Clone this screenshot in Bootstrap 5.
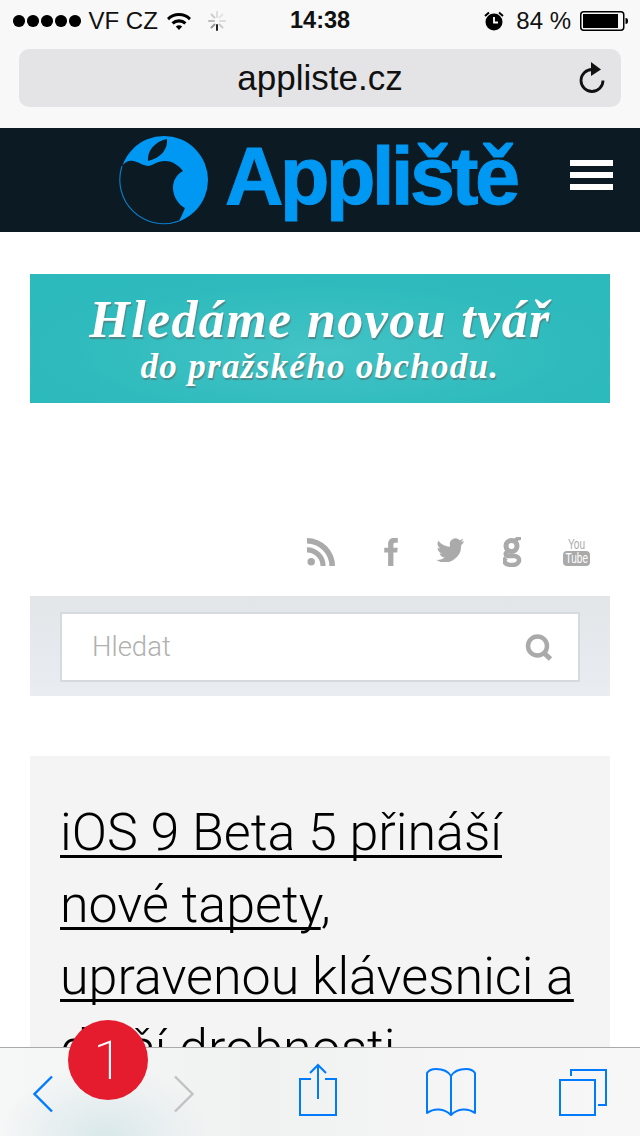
<!DOCTYPE html>
<html lang="cs">
<head>
<meta charset="UTF-8">
<meta name="viewport" content="width=device-width, initial-scale=1.0">
<title>Appliště</title>
<link href="https://cdn.jsdelivr.net/npm/bootstrap@5.3.3/dist/css/bootstrap.min.css" rel="stylesheet">
<script src="https://cdn.jsdelivr.net/npm/bootstrap@5.3.3/dist/js/bootstrap.bundle.min.js"></script>
<style>
html, body { margin: 0; height: 1136px; overflow: hidden; background: #fff; }
body { font-family: "Liberation Sans", Arial, sans-serif; position: relative; width: 640px; }
.browser-top { height: 128px; background: #f8f8f8; }
.status-row { height: 42px; padding: 0 12px 0 13px; font-size: 24px; color: #111; }
.dots { display: flex; gap: 2.500px; margin-right: 8px; }
.dots i { width: 11.500px; height: 11.500px; border-radius: 50%; background: #000; display: block; }
.st-left { width: 277px; }
.st-time { font-size: 23.500px; font-weight: 700; width: 120px; }
.st-right { flex: 1; justify-content: flex-end; }
.gap-alarm { margin-left: 12px; }
.gap-batt { margin-left: 9px; }
.url-wrap { height: 58px; margin: 7px 19px 0; background: #e4e4e6; border-radius: 10px; position: relative; font-size: 35px; color: #111; }
.url-reload { position: absolute; right: 15px; top: 12px; }
.site-head { height: 104px; background: #0c1a24; }
.logo-wrap { margin-left: 119px; width: 400px; }
.logo-word { font-size: 81px; font-weight: 700; color: #0098f2; letter-spacing: -3.500px; line-height: 104px; margin: -8px 0 0 16px; white-space: nowrap; -webkit-text-stroke: 1px #0098f2; }
.burger { margin-left: 51px; margin-bottom: 10px; width: 43px; display: flex; flex-direction: column; gap: 6px; }
.burger i { display: block; height: 6px; background: #fff; }
.promo { height: 129px; margin: 42px 30px 0; background: radial-gradient(ellipse at 50% 60%, #43c3c6 0%, #2fbbbd 60%, #2bb9bb 100%); color: #fff; text-align: center; font-family: "Liberation Serif", serif; font-style: italic; font-weight: 700; text-shadow: 1px 2px 1px #4b8b8c; }
.promo-a { font-size: 52px; line-height: 58px; letter-spacing: 1.400px; padding-top: 17px; white-space: nowrap; }
.promo-b { font-size: 35px; line-height: 36px; letter-spacing: 1.300px; white-space: nowrap; }
.social { height: 30px; margin: 134px 50px 0 0; justify-content: flex-end; }
.social-item { display: block; flex-shrink: 0; }
.gap-rss { margin-right: 49px; }
.gap-fb { margin-right: 38px; }
.gap-tw { margin-right: 39px; margin-top: -4px; }
.gap-g { margin-right: 41px; }
.yt-wrap { width: 27px; text-align: center; color: #aaa; line-height: 1; margin-top: -1px; }
.yt-you { font-size: 14px; display: block; height: 14px; line-height: 14px; transform: scaleX(.72); }
.yt-tube { display: flex; justify-content: center; background: #aaa; color: #fff; border-radius: 4px; font-size: 14px; height: 15px; line-height: 15px; width: 27px; }
.yt-tube span { display: block; flex-shrink: 0; transform: scaleX(.72); }
.search-panel { height: 100px; margin: 29px 30px 0; padding: 16px 30px; background: linear-gradient(#e2e6e9, #e9ecf1); }
.search-box { height: 70px; background: #fff; border: 2px solid #d5dae0; padding: 0 25px 0 30px; font-family: Roboto, sans-serif; font-weight: 300; font-size: 27.500px; color: #b0b0b0; }
.article-box { margin: 60px 30px 0; padding: 41px 30px 0; background: #f4f4f4; height: 340px; font-family: Roboto, sans-serif; font-weight: 300; font-size: 52px; line-height: 72px; color: #000; }
.article-box a { color: #000; text-decoration: underline; text-decoration-thickness: 3px; text-underline-offset: 5px; text-decoration-skip-ink: none; }
.toolbar { position: absolute; left: 0; right: 0; top: 1047px; height: 89px; border-top: 1px solid #aaa; background: radial-gradient(ellipse 105px 70px at 105px 89px, #d9e8ea 0%, rgba(230,238,240,.7) 60%, rgba(243,243,243,0) 100%), linear-gradient(90deg, #f6f7f7 0%, #f0f1f1 40%, #f5f5f5 70%, #f7f7f7 100%); }
.tb-icon { position: absolute; display: block; }
.notif { position: absolute; left: 68px; top: 1020px; width: 80px; height: 80px; border-radius: 50%; background: #e41c2e; color: #fff; font-size: 54px; font-family: Roboto, sans-serif; font-weight: 200; }
</style>
</head>
<body>
<div class="browser-top">
    <div class="status-row d-flex align-items-center">
        <div class="st-left d-flex align-items-center">
            <div class="dots"><i></i><i></i><i></i><i></i><i></i></div>
            <span>VF CZ</span>
            <svg class="ms-2" width="26" height="20" viewBox="0 0 26 20"><path d="M1 7a17 17 0 0 1 24 0l-2 2.200a14 14 0 0 0-20 0z" fill="#000"/><path d="M5.500 11.300a11 11 0 0 1 15 0l-2.100 2.200a8 8 0 0 0-10.800 0z" fill="#000"/><path d="M9.800 15.500a5 5 0 0 1 6.400 0L13 19z" fill="#000"/></svg>
            <svg class="ms-3" width="18" height="20" viewBox="0 0 18 20" stroke-width="2" stroke-linecap="round"><path d="M9 1v5" stroke="#ddd"/><path d="M14.500 3.500l-3 3" stroke="#e4e4e4"/><path d="M17 10h-5" stroke="#ddd"/><path d="M14.500 16.500l-3-3" stroke="#ccc"/><path d="M9 19v-5" stroke="#222"/><path d="M3.500 16.500l3-3" stroke="#999"/><path d="M1 10h5" stroke="#bbb"/><path d="M3.500 3.500l3 3" stroke="#ccc"/></svg>
        </div>
        <div class="st-time">14:38</div>
        <div class="st-right d-flex align-items-center">
            <svg width="20" height="20" viewBox="0 0 20 20"><circle cx="10" cy="11" r="8.500" fill="#000"/><path d="M10 6v5.500H14" fill="none" stroke="#fff" stroke-width="1.800"/><path d="M1 5l4-3.500M19 5l-4-3.500" stroke="#000" stroke-width="2"/></svg>
            <span class="gap-alarm">84 %</span>
            <svg class="gap-batt" width="48" height="20" viewBox="0 0 48 20"><rect x=".75" y=".75" width="43" height="18.500" rx="3" fill="none" stroke="#000" stroke-width="1.500"/><rect x="3" y="3" width="35" height="14" fill="#000"/><path d="M45.500 7c2 0 2.500 1 2.500 3s-.5 3-2.500 3z" fill="#000"/></svg>
        </div>
    </div>
    <div class="url-wrap d-flex align-items-center justify-content-center">
        <span>appliste.cz</span>
        <svg class="url-reload" width="28" height="34" viewBox="0 0 28 34"><path d="M14 8.500a11 11 0 1 0 11 11" fill="none" stroke="#111" stroke-width="2.800"/><path d="M13 1l10 7.500L13 15z" fill="#111"/></svg>
    </div>
</div>

<header class="site-head d-flex align-items-center">
    <div class="logo-wrap d-flex align-items-center">
        <svg width="90" height="90" viewBox="0 0 90 90" class="flex-shrink-0">
            <circle cx="45" cy="45" r="44" fill="#0098f2"/>
            <path d="M3 31C6 27 10 25 14 26C20 27 25 31 29 31C33 31 38 26 46 26C54 26 60 31 64 36C57 40 54 46 54 53C54 62 60 70 66 73C64 78 62 82 60 86A44 44 0 0 1 3 31z" fill="#0c1a24"/>
            <path d="M3 31A44 44 0 0 0 60 86" fill="none" stroke="#0a78c0" stroke-width="1.200"/>
            <path d="M29 26C28 14 38 6 48 4C49 14 42 23 29 26z" fill="#0c1a24"/>
        </svg>
        <div class="logo-word">Appliště</div>
    </div>
    <div class="burger"><i></i><i></i><i></i></div>
</header>

<div class="promo">
    <div class="promo-a">Hledáme novou tvář</div>
    <div class="promo-b">do pražského obchodu.</div>
</div>

<div class="social d-flex align-items-center">
    <svg class="social-item gap-rss" width="28" height="28" viewBox="0 0 30 30" fill="#aaa"><circle cx="4.500" cy="25.500" r="4"/><path d="M0 10v5.500A14.500 14.500 0 0 1 14.500 30H20A20 20 0 0 0 0 10z"/><path d="M0 0v6A24 24 0 0 1 24 30h6A30 30 0 0 0 0 0z"/></svg>
    <svg class="social-item gap-fb" width="14" height="28" viewBox="0 0 14 29" fill="#aaa"><path d="M4 29V15H0v-5h4V6.500C4 2 6.500 0 10 0h4v5h-2.500C9.800 5 9.500 5.800 9.500 7v3H14l-.6 5H9.500v14z"/></svg>
    <svg class="social-item gap-tw" width="28" height="24" viewBox="0 0 28 24" fill="#aaa"><path d="M28 3c-1 .5-2 .8-3.200 1 1.200-.8 2-1.900 2.500-3.200-1.100.7-2.300 1.100-3.600 1.400A5.700 5.700 0 0 0 14 7.400c0 .5 0 .9.100 1.300C9.400 8.500 5.200 6.200 2.300 2.700c-1.500 2.600-.8 5.800 1.800 7.700-.9 0-1.800-.3-2.600-.7 0 2.800 2 5.200 4.600 5.700-.8.200-1.700.3-2.600.1.700 2.300 2.900 4 5.400 4A11.500 11.500 0 0 1 0 21.800 16.300 16.300 0 0 0 25.100 7.300c1.200-.8 2.200-2 2.900-4.300z"/></svg>
    <svg class="social-item gap-g" width="19" height="30" viewBox="0 0 19 30" fill="none" stroke="#aaa"><circle cx="8.500" cy="9" r="5.500" stroke-width="5"/><path d="M12 3.500c2-2 4-2.500 6-2.500" stroke-width="4"/><path d="M5 14c-3 2-3 4 0 5h6c7 0 7 9-1.500 9S0 24 3 21" stroke-width="4.500"/></svg>
    <div class="yt-wrap social-item"><span class="yt-you">You</span><span class="yt-tube"><span>Tube</span></span></div>
</div>

<div class="search-panel">
    <div class="search-box d-flex align-items-center justify-content-between">
        <span>Hledat</span>
        <svg width="28" height="27" viewBox="0 0 28 27" fill="none" stroke="#aaa"><circle cx="12.500" cy="12" r="9.500" stroke-width="4.500"/><path d="M19 19l6.500 6" stroke-width="5"/></svg>
    </div>
</div>

<div class="article-box">
    <a href="#">iOS 9 Beta 5 přináší</a><br><a href="#">nové tapety</a>,<br><a href="#">upravenou klávesnici a</a><br><a href="#">další drobnosti</a>
</div>

<nav class="toolbar">
    <svg class="tb-icon" style="left:32px;top:27px" width="22" height="38" viewBox="0 0 22 38" fill="none" stroke="#007aff" stroke-width="2.400"><path d="M20 1.500L2.500 19 20 36.500"/></svg>
    <svg class="tb-icon" style="left:173px;top:27px" width="22" height="38" viewBox="0 0 22 38" fill="none" stroke="#c2c2c2" stroke-width="2.400"><path d="M2 1.500L19.500 19 2 36.500"/></svg>
    <svg class="tb-icon" style="left:298px;top:15px" width="40" height="54" viewBox="0 0 40 54" fill="none" stroke="#007aff" stroke-width="2"><path d="M13 16H2v36h36V16H27"/><path d="M20 36V2"/><path d="M12 10l8-8 8 8"/></svg>
    <svg class="tb-icon" style="left:425px;top:19px" width="52" height="50" viewBox="0 0 52 50" fill="none" stroke="#007aff" stroke-width="2" stroke-linejoin="round"><path d="M26 9C23 4 17 2 11 2 7 2 4 3 2 6v40c7-5 17-5 24 2 7-7 17-7 24-2V6c-2-3-5-4-9-4-6 0-12 2-15 7z"/><path d="M26 9v39"/></svg>
    <svg class="tb-icon" style="left:558px;top:20px" width="50" height="49" viewBox="0 0 50 49" fill="none" stroke="#007aff" stroke-width="2"><rect x="2" y="12" width="35" height="35"/><path d="M13 8V2h35v35h-8"/></svg>
</nav>
<div class="notif d-flex align-items-center justify-content-center">1</div>
</body>
</html>
